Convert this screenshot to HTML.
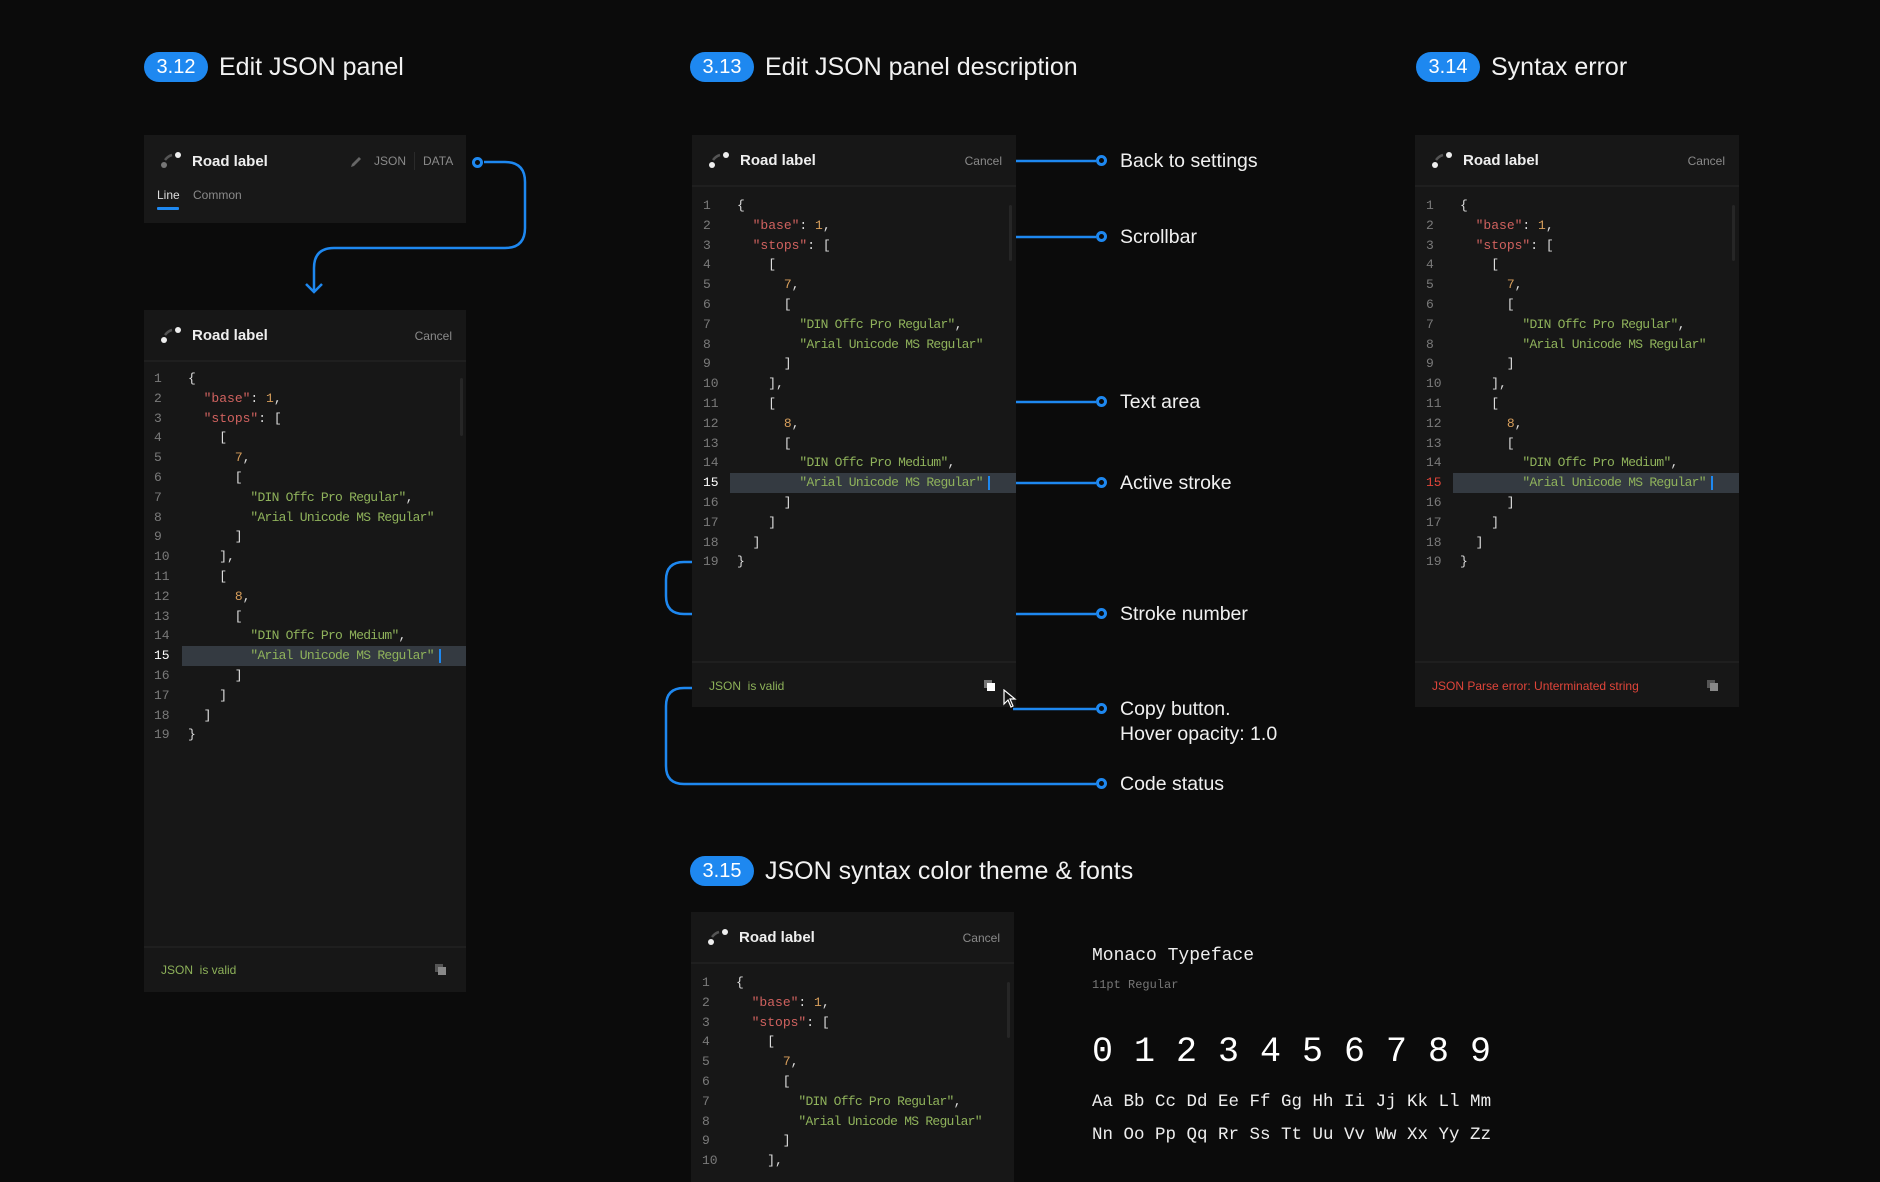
<!DOCTYPE html>
<html><head><meta charset="utf-8">
<style>
*{margin:0;padding:0;box-sizing:border-box}
body{width:1880px;height:1170px;background:#0b0b0b;position:relative;overflow:hidden;font-family:"Liberation Sans",sans-serif;color:#fff}
.badge{position:absolute;height:30px;width:64px;border-radius:15px;background:#1e88f0;color:#fff;font-size:20px;line-height:30px;text-align:center}
.title{position:absolute;font-size:25px;line-height:30px;color:#f2f2f2}
.panel{position:absolute;background:#171717;overflow:hidden}
.hdr{position:absolute;left:0;right:0;top:0;height:52px;border-bottom:2px solid #1f1f1f}
.rl{position:absolute;left:48px;top:17px;font-size:15px;font-weight:bold;color:#eee}
.ic{position:absolute;left:16px;top:16px}
.cancel{position:absolute;right:14px;top:19px;font-size:12px;color:#8a8a8a}
.code{position:absolute;font-family:"Liberation Mono",monospace;font-size:13px;color:#ddd}
.code div{height:19.8px;line-height:19.8px;position:relative;white-space:pre}
.code .n{position:absolute;left:-34px;color:#7a7a7a}
.k{color:#d0625f}.s{color:#8fb25b;letter-spacing:-0.75px}.d{color:#d79e5b}
.hl{position:absolute;height:19.8px;right:0;background:#343a41}
.foot{position:absolute;left:0;right:0;border-top:2px solid #1f1f1f}
.valid{position:absolute;font-size:12px;color:#8db159}
.ann{position:absolute;font-size:19.5px;color:#f0f0f0;line-height:25px}
.dot{position:absolute;width:11px;height:11px;border-radius:50%;border:3px solid #1e88f0;background:#0b0b0b}
.mono{font-family:"Liberation Mono","DejaVu Sans Mono",monospace}
</style></head><body>

<div class="badge" style="left:144px;top:52px">3.12</div><div class="title" style="left:219px;top:52px">Edit JSON panel</div>
<div class="badge" style="left:690px;top:52px">3.13</div><div class="title" style="left:765px;top:52px">Edit JSON panel description</div>
<div class="badge" style="left:1416px;top:52px">3.14</div><div class="title" style="left:1491px;top:52px">Syntax error</div>
<div class="badge" style="left:690px;top:856px">3.15</div><div class="title" style="left:765px;top:856px">JSON syntax color theme &amp; fonts</div>

<svg style="position:absolute;left:0;top:0" width="1880" height="1170" fill="none" stroke="#1e88f0" stroke-width="2.5">
<path d="M484 162 H505 Q525 162 525 182 V228 Q525 248 505 248 H334 Q314 248 314 268 V290"/>
<path d="M306 284 L314 292 L322 284"/>
<path d="M1010 161 H1096"/>
<path d="M1010 237 H1096"/>
<path d="M884 402 H1096"/>
<path d="M1005 483 H1096"/>
<path d="M696 562 H684 Q666 562 666 580 V596 Q666 614 684 614 H1096"/>
<path d="M1013 709 H1096"/>
<path d="M696 688 H684 Q666 688 666 706 V766 Q666 784 684 784 H1096"/>
</svg>
<div class="dot" style="left:472px;top:157px"></div>
<div class="dot" style="left:1096px;top:155px"></div><div class="ann" style="left:1120px;top:149px">Back to settings</div>
<div class="dot" style="left:1096px;top:231px"></div><div class="ann" style="left:1120px;top:225px">Scrollbar</div>
<div class="dot" style="left:1096px;top:396px"></div><div class="ann" style="left:1120px;top:390px">Text area</div>
<div class="dot" style="left:1096px;top:477px"></div><div class="ann" style="left:1120px;top:471px">Active stroke</div>
<div class="dot" style="left:1096px;top:608px"></div><div class="ann" style="left:1120px;top:602px">Stroke number</div>
<div class="dot" style="left:1096px;top:703px"></div><div class="ann" style="left:1120px;top:697px">Copy button.<br>Hover opacity: 1.0</div>
<div class="dot" style="left:1096px;top:778px"></div><div class="ann" style="left:1120px;top:772px">Code status</div>

<!-- Panel 1 -->
<div class="panel" style="left:144px;top:135px;width:322px;height:88px;background:#181818">
<svg class="ic" width="22" height="18"><circle cx="4" cy="14" r="3" fill="#777"/><circle cx="18" cy="4" r="3" fill="#eee"/><path d="M5 9 Q8 5 12 4" stroke="#555" stroke-width="2.5" fill="none"/></svg>
<div class="rl" style="top:18px">Road label</div>
<svg style="position:absolute;left:205px;top:20px" width="14" height="14"><path d="M2 12 L3 9 L10 2 L12 4 L5 11 Z" fill="#666"/></svg>
<div style="position:absolute;left:230px;top:19px;font-size:12px;color:#8a8a8a">JSON</div>
<div style="position:absolute;left:270px;top:17px;width:1px;height:18px;background:#2a2a2a"></div>
<div style="position:absolute;left:279px;top:19px;font-size:12px;color:#8a8a8a">DATA</div>
<div style="position:absolute;left:13px;top:53px;font-size:12px;color:#ddd">Line</div>
<div style="position:absolute;left:13px;top:72px;width:22px;height:3px;background:#1e88f0;border-radius:1px"></div>
<div style="position:absolute;left:49px;top:53px;font-size:12px;color:#8a8a8a">Common</div>
</div>

<!-- Panel 2 -->
<div class="panel" style="left:144px;top:310px;width:322px;height:682px">
<div class="hdr"><svg class="ic" width="22" height="18"><circle cx="4" cy="14" r="3" fill="#eee"/><circle cx="18" cy="4" r="3" fill="#eee"/><path d="M5 9 Q8 5 12 4" stroke="#555" stroke-width="2.5" fill="none"/></svg><div class="rl">Road label</div><div class="cancel">Cancel</div></div>
<div style="position:absolute;left:316px;top:68px;width:3px;height:58px;background:#262626;border-radius:2px"></div>
<div class="hl" style="left:38px;top:336px"></div>
<div style="position:absolute;left:295px;top:339px;width:1.5px;height:14px;background:#1e88f0"></div>
<div class="code" style="left:44px;top:59px">
<div><span class="n">1</span>{</div>
<div><span class="n">2</span>  <span class="k">"base"</span>: <span class="d">1</span>,</div>
<div><span class="n">3</span>  <span class="k">"stops"</span>: [</div>
<div><span class="n">4</span>    [</div>
<div><span class="n">5</span>      <span class="d">7</span>,</div>
<div><span class="n">6</span>      [</div>
<div><span class="n">7</span>        <span class="s">"DIN Offc Pro Regular"</span>,</div>
<div><span class="n">8</span>        <span class="s">"Arial Unicode MS Regular"</span></div>
<div><span class="n">9</span>      ]</div>
<div><span class="n">10</span>    ],</div>
<div><span class="n">11</span>    [</div>
<div><span class="n">12</span>      <span class="d">8</span>,</div>
<div><span class="n">13</span>      [</div>
<div><span class="n">14</span>        <span class="s">"DIN Offc Pro Medium"</span>,</div>
<div><span class="n" style="color:#fff">15</span>        <span class="s">"Arial Unicode MS Regular"</span></div>
<div><span class="n">16</span>      ]</div>
<div><span class="n">17</span>    ]</div>
<div><span class="n">18</span>  ]</div>
<div><span class="n">19</span>}</div>
</div>
<div class="foot" style="top:636px"></div>
<div class="valid" style="left:17px;top:653px">JSON&nbsp; is valid</div>
<svg style="position:absolute;left:291px;top:654px" width="12" height="12"><rect x="0" y="0" width="8" height="8" fill="#555"/><rect x="3" y="3" width="8" height="8" fill="#888"/></svg>
</div>

<!-- Panel 3 -->
<div class="panel" style="left:692px;top:135px;width:324px;height:572px">
<div class="hdr"><svg class="ic" width="22" height="18"><circle cx="4" cy="14" r="3" fill="#eee"/><circle cx="18" cy="4" r="3" fill="#eee"/><path d="M5 9 Q8 5 12 4" stroke="#555" stroke-width="2.5" fill="none"/></svg><div class="rl">Road label</div><div class="cancel">Cancel</div></div>
<div style="position:absolute;left:317px;top:70px;width:3px;height:56px;background:#262626;border-radius:2px"></div>
<div class="hl" style="left:38px;top:338px"></div>
<div style="position:absolute;left:296px;top:341px;width:1.5px;height:14px;background:#1e88f0"></div>
<div class="code" style="left:45px;top:61px">
<div><span class="n">1</span>{</div>
<div><span class="n">2</span>  <span class="k">"base"</span>: <span class="d">1</span>,</div>
<div><span class="n">3</span>  <span class="k">"stops"</span>: [</div>
<div><span class="n">4</span>    [</div>
<div><span class="n">5</span>      <span class="d">7</span>,</div>
<div><span class="n">6</span>      [</div>
<div><span class="n">7</span>        <span class="s">"DIN Offc Pro Regular"</span>,</div>
<div><span class="n">8</span>        <span class="s">"Arial Unicode MS Regular"</span></div>
<div><span class="n">9</span>      ]</div>
<div><span class="n">10</span>    ],</div>
<div><span class="n">11</span>    [</div>
<div><span class="n">12</span>      <span class="d">8</span>,</div>
<div><span class="n">13</span>      [</div>
<div><span class="n">14</span>        <span class="s">"DIN Offc Pro Medium"</span>,</div>
<div><span class="n" style="color:#fff">15</span>        <span class="s">"Arial Unicode MS Regular"</span></div>
<div><span class="n">16</span>      ]</div>
<div><span class="n">17</span>    ]</div>
<div><span class="n">18</span>  ]</div>
<div><span class="n">19</span>}</div>
</div>
<div class="foot" style="top:526px"></div>
<div class="valid" style="left:17px;top:544px">JSON&nbsp; is valid</div>
<svg style="position:absolute;left:292px;top:545px" width="12" height="12"><rect x="0" y="0" width="8" height="8" fill="#777"/><rect x="3" y="3" width="8" height="8" fill="#fff"/></svg>
</div>
<svg style="position:absolute;left:1003px;top:689px" width="14" height="20"><path d="M1 1 L1 15 L5 11 L8 18 L10 17 L7 10 L12 10 Z" fill="#111" stroke="#fff" stroke-width="1.2"/></svg>

<!-- Panel 4 -->
<div class="panel" style="left:1415px;top:135px;width:324px;height:572px">
<div class="hdr"><svg class="ic" width="22" height="18"><circle cx="4" cy="14" r="3" fill="#eee"/><circle cx="18" cy="4" r="3" fill="#eee"/><path d="M5 9 Q8 5 12 4" stroke="#555" stroke-width="2.5" fill="none"/></svg><div class="rl">Road label</div><div class="cancel">Cancel</div></div>
<div style="position:absolute;left:317px;top:70px;width:3px;height:56px;background:#262626;border-radius:2px"></div>
<div class="hl" style="left:38px;top:338px"></div>
<div style="position:absolute;left:296px;top:341px;width:1.5px;height:14px;background:#1e88f0"></div>
<div class="code" style="left:45px;top:61px">
<div><span class="n">1</span>{</div>
<div><span class="n">2</span>  <span class="k">"base"</span>: <span class="d">1</span>,</div>
<div><span class="n">3</span>  <span class="k">"stops"</span>: [</div>
<div><span class="n">4</span>    [</div>
<div><span class="n">5</span>      <span class="d">7</span>,</div>
<div><span class="n">6</span>      [</div>
<div><span class="n">7</span>        <span class="s">"DIN Offc Pro Regular"</span>,</div>
<div><span class="n">8</span>        <span class="s">"Arial Unicode MS Regular"</span></div>
<div><span class="n">9</span>      ]</div>
<div><span class="n">10</span>    ],</div>
<div><span class="n">11</span>    [</div>
<div><span class="n">12</span>      <span class="d">8</span>,</div>
<div><span class="n">13</span>      [</div>
<div><span class="n">14</span>        <span class="s">"DIN Offc Pro Medium"</span>,</div>
<div><span class="n" style="color:#e0453a">15</span>        <span class="s">"Arial Unicode MS Regular"</span></div>
<div><span class="n">16</span>      ]</div>
<div><span class="n">17</span>    ]</div>
<div><span class="n">18</span>  ]</div>
<div><span class="n">19</span>}</div>
</div>
<div class="foot" style="top:526px"></div>
<div class="valid" style="left:17px;top:544px;color:#e0453a">JSON Parse error: Unterminated string</div>
<svg style="position:absolute;left:292px;top:545px" width="12" height="12"><rect x="0" y="0" width="8" height="8" fill="#555"/><rect x="3" y="3" width="8" height="8" fill="#888"/></svg>
</div>

<!-- Panel 5 -->
<div class="panel" style="left:691px;top:912px;width:323px;height:270px">
<div class="hdr"><svg class="ic" width="22" height="18"><circle cx="4" cy="14" r="3" fill="#eee"/><circle cx="18" cy="4" r="3" fill="#eee"/><path d="M5 9 Q8 5 12 4" stroke="#555" stroke-width="2.5" fill="none"/></svg><div class="rl">Road label</div><div class="cancel">Cancel</div></div>
<div style="position:absolute;left:316px;top:70px;width:3px;height:56px;background:#262626;border-radius:2px"></div>
<div class="code" style="left:45px;top:61px">
<div><span class="n">1</span>{</div>
<div><span class="n">2</span>  <span class="k">"base"</span>: <span class="d">1</span>,</div>
<div><span class="n">3</span>  <span class="k">"stops"</span>: [</div>
<div><span class="n">4</span>    [</div>
<div><span class="n">5</span>      <span class="d">7</span>,</div>
<div><span class="n">6</span>      [</div>
<div><span class="n">7</span>        <span class="s">"DIN Offc Pro Regular"</span>,</div>
<div><span class="n">8</span>        <span class="s">"Arial Unicode MS Regular"</span></div>
<div><span class="n">9</span>      ]</div>
<div><span class="n">10</span>    ],</div>
</div>
</div>

<!-- Typography -->
<div class="mono" style="position:absolute;left:1092px;top:946px;font-size:18px;color:#eee">Monaco Typeface</div>
<div class="mono" style="position:absolute;left:1092px;top:978px;font-size:12px;color:#777">11pt Regular</div>
<div class="mono" style="position:absolute;left:1092px;top:1030px;font-size:35px;line-height:44px;color:#fff;white-space:pre">0 1 2 3 4 5 6 7 8 9</div>
<div class="mono" style="position:absolute;left:1092px;top:1086px;font-size:17.5px;line-height:33px;color:#eee;white-space:pre">Aa Bb Cc Dd Ee Ff Gg Hh Ii Jj Kk Ll Mm
Nn Oo Pp Qq Rr Ss Tt Uu Vv Ww Xx Yy Zz</div>
</body></html>
